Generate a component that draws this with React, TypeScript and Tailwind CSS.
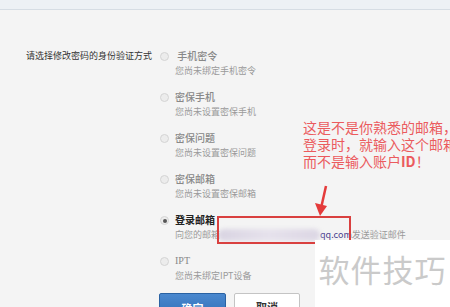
import React from 'react';

type Option = {
  title: string;
  sub: React.ReactNode;
  checked?: boolean;
  strong?: boolean;
  serif?: boolean;
};

const options: Option[] = [
  { title: '\u00a0手机密令', sub: '您尚未绑定手机密令' },
  { title: '密保手机', sub: '您尚未设置密保手机' },
  { title: '密保问题', sub: '您尚未设置密保问题' },
  { title: '密保邮箱', sub: '您尚未设置密保邮箱' },
  {
    title: '登录邮箱',
    checked: true,
    strong: true,
    sub: (
      <span className="inline-flex items-center">
        向您的邮箱
        <span className="inline-block w-[102px] h-[12px] -ml-[2px] rounded-full bg-gradient-to-r from-[#d9d4e2] via-[#e6e2ec] to-[#dcd6e4] blur-[2px]" />
        <span className="text-[#4b3f8f]">qq.com</span>
        发送验证邮件
      </span>
    ),
  },
  { title: 'IPT', sub: '您尚未绑定IPT设备', serif: true },
];

function Radio({ checked }: { checked?: boolean }) {
  return (
    <span className="mt-[3px] w-[9px] h-[9px] shrink-0 rounded-full border border-[#d4d4d4] bg-[#ececec] flex items-center justify-center">
      {checked && <span className="w-[4px] h-[4px] rounded-full bg-[#555]" />}
    </span>
  );
}

export default function App() {
  return (
    <div
      className="relative w-[450px] h-[307px] overflow-hidden bg-[#f4f4f4]"
      style={{ fontFamily: '"Noto Sans CJK SC", "Liberation Sans", sans-serif' }}
    >
      {/* top strip */}
      <div className="h-[10px] bg-[#edf1f5] border-b border-[#d6dde4]" />

      {/* form */}
      <div className="flex pl-[26px] pt-[39px]">
        <div className="w-[134px] text-[9px] leading-[14px] text-[#333]">请选择修改密码的身份验证方式</div>
        <div className="flex flex-col">
          {options.map((o) => (
            <div key={o.title} className="flex gap-[6px] h-[41px]">
              <Radio checked={o.checked} />
              <div className="flex flex-col">
                <span
                  className={`text-[10px] leading-[14px] ${
                    o.strong ? 'font-bold text-[#222]' : 'font-medium text-[#888]'
                  } ${o.serif ? 'font-[Liberation_Serif]' : ''}`}
                >
                  {o.title}
                </span>
                <span className="mt-px text-[9px] leading-[14px] text-[#9a9a9a] whitespace-nowrap">{o.sub}</span>
              </div>
            </div>
          ))}
          <div className="flex gap-[8px] -mt-[2px] -ml-px">
            <button className="w-[67px] h-[28px] rounded-[2px] bg-gradient-to-b from-[#4a88cf] to-[#2e6db4] border border-[#2a62a3] text-white text-[11px] font-bold leading-[20px] pt-px items-start">
              确定
            </button>
            <button className="w-[66px] h-[28px] rounded-[2px] bg-white border border-[#c4c4c4] text-[#333] text-[11px] font-bold">
              取消
            </button>
          </div>
        </div>
      </div>

      {/* annotation */}
      <div className="absolute left-[303px] top-[119px] text-[14px] leading-[17px] text-[#eb5b5e] whitespace-nowrap">
        <div>这是不是你熟悉的邮箱，</div>
        <div>登录时，就输入这个邮箱</div>
        <div>
          而不是输入账户<span className="font-bold">ID</span>！
        </div>
      </div>

      <svg className="absolute left-[312px] top-[184px]" width="20" height="34" viewBox="0 0 20 34">
        <line x1="14" y1="2" x2="9.5" y2="22" stroke="#e43b3b" strokeWidth="2.5" />
        <polygon points="3,19 15,22 8,32" fill="#e43b3b" />
      </svg>

      <div className="absolute left-[217px] top-[216px] w-[134px] h-[28px] border-2 border-[#d9403f]" />

      {/* watermark */}
      <div className="absolute left-[315px] top-[240px] w-[135px] h-[67px] bg-white flex items-start justify-center pt-[11px]">
        <span className="text-[31px] leading-[36px] text-[#cacaca] tracking-[1px]">软件技巧</span>
      </div>
    </div>
  );
}
